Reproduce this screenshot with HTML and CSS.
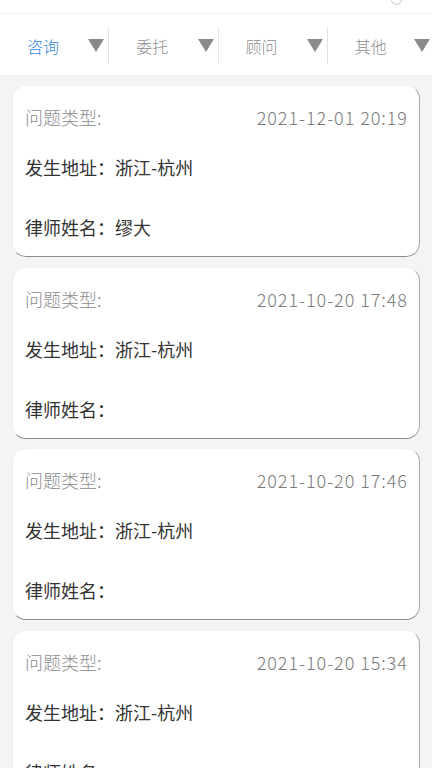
FILE: index.html
```html
<!DOCTYPE html>
<html lang="zh-CN">
<head>
<meta charset="utf-8">
<meta name="viewport" content="width=device-width, initial-scale=1">
<title>咨询列表</title>
<link rel="stylesheet" href="styles.css">
</head>
<body>
<header class="topbar">
  <span class="top-icon"></span>
</header>
<nav class="tabs">
  <div class="tab active"><span class="tab-label">咨询</span><span class="caret"></span></div>
  <div class="tab"><span class="tab-label">委托</span><span class="caret"></span></div>
  <div class="tab"><span class="tab-label">顾问</span><span class="caret"></span></div>
  <div class="tab last"><span class="tab-label">其他</span><span class="caret"></span></div>
</nav>
<main class="list">
  <section class="card">
    <div class="row head"><span class="type">问题类型:</span><span class="date">2021-12-01 20:19</span></div>
    <div class="row addr">发生地址：浙江-杭州</div>
    <div class="row lawyer">律师姓名：缪大</div>
  </section>
  <section class="card">
    <div class="row head"><span class="type">问题类型:</span><span class="date">2021-10-20 17:48</span></div>
    <div class="row addr">发生地址：浙江-杭州</div>
    <div class="row lawyer">律师姓名：</div>
  </section>
  <section class="card">
    <div class="row head"><span class="type">问题类型:</span><span class="date">2021-10-20 17:46</span></div>
    <div class="row addr">发生地址：浙江-杭州</div>
    <div class="row lawyer">律师姓名：</div>
  </section>
  <section class="card">
    <div class="row head"><span class="type">问题类型:</span><span class="date">2021-10-20 15:34</span></div>
    <div class="row addr">发生地址：浙江-杭州</div>
    <div class="row lawyer">律师姓名：</div>
  </section>
</main>
</body>
</html>
```
FILE: styles.css
```css
html, body {
  margin: 0;
  padding: 0;
}
body {
  width: 432px;
  height: 768px;
  overflow: hidden;
  background: #f3f4f6;
  font-family: "Noto Sans CJK SC", "Noto Sans", sans-serif;
}
.topbar {
  height: 14px;
  background: #fff;
  border-bottom: 1px solid #f0f0f0;
  box-sizing: border-box;
  position: relative;
}
.top-icon {
  position: absolute;
  left: 391px;
  top: -6px;
  width: 9px;
  height: 9px;
  border: 1.5px solid #c8c8c8;
  border-radius: 50%;
}
.tabs {
  display: flex;
  height: 61px;
  background: #fff;
  align-items: center;
}
.tab {
  flex: 1;
  display: flex;
  align-items: center;
  height: 36px;
  padding-left: 27px;
  padding-right: 4px;
  border-right: 1px solid #e2e2e2;
  box-sizing: border-box;
  margin-top: 2px;
}
.tab.last {
  border-right: none;
  padding-right: 0;
}
.tab-label {
  font-size: 16px;
  font-weight: 300;
  color: #8f8f8f;
  line-height: 20px;
}
.tab.active .tab-label {
  color: #3389d6;
}
.caret {
  margin-left: auto;
  width: 0;
  height: 0;
  border-left: 8px solid transparent;
  border-right: 8px solid transparent;
  border-top: 13px solid #8a8a8a;
  margin-top: -1px;
}
.tab.last .caret {
  margin-right: 2px;
}
.list {
  padding: 10px 12px 0;
}
.card {
  height: 172px;
  box-sizing: border-box;
  background: #fff;
  border-radius: 14px;
  border-top: 1px solid #f1f1f1;
  border-left: 1px solid #ececec;
  border-right: 1.5px solid #a8a8a8;
  border-bottom: 1.5px solid #8c8c8c;
  margin-bottom: 9.5px;
  padding: 0 12px 0 12px;
  display: flex;
  flex-direction: column;
}
.row {
  display: flex;
  align-items: center;
  font-size: 18px;
  line-height: 24px;
  color: #333;
}
.head {
  margin-top: 19px;
  justify-content: space-between;
}
.type {
  color: #8c8c8c;
  font-weight: 300;
}
.date {
  color: #7a7a7a;
  font-size: 18px;
  font-weight: 300;
  letter-spacing: 0.95px;
  margin-right: -0.95px;
}
.addr {
  margin-top: 26px;
}
.lawyer {
  margin-top: 36px;
}
```
